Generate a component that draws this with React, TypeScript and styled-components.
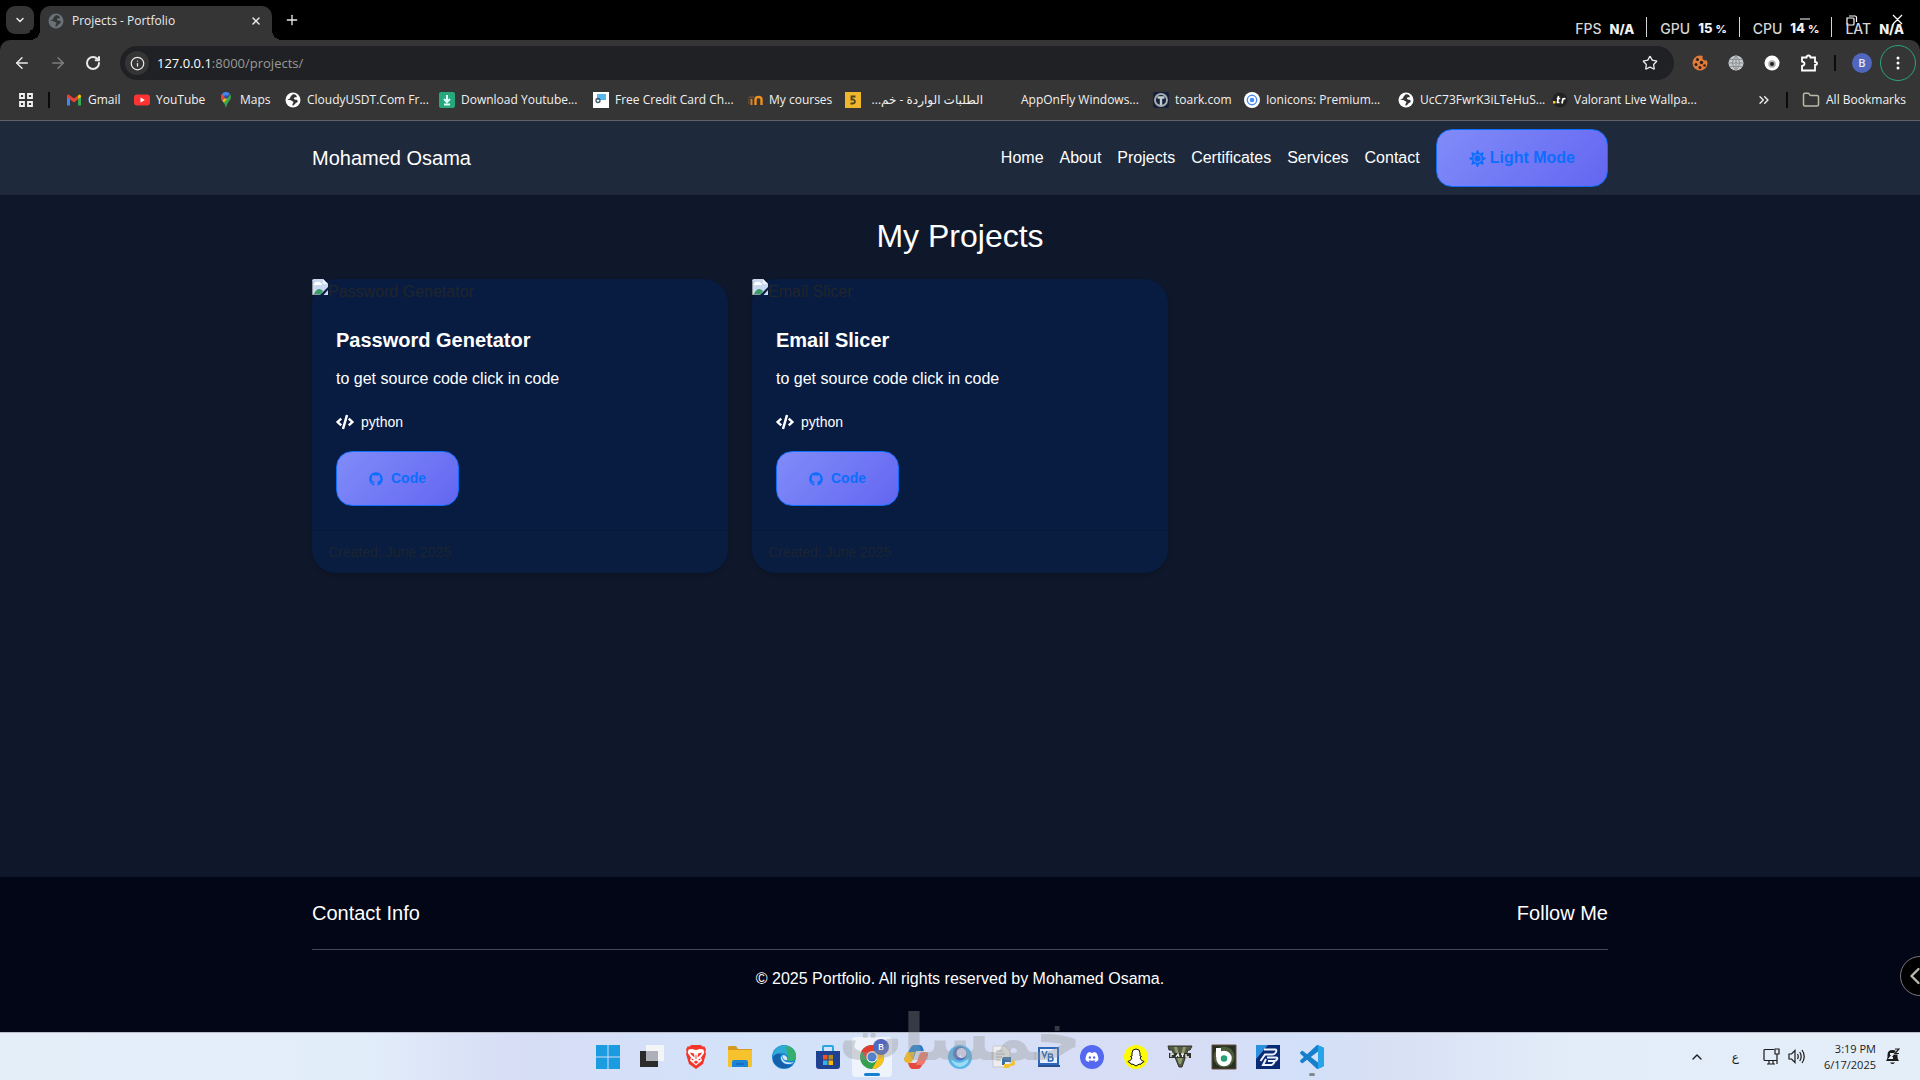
import React from 'react';
import styled, { createGlobalStyle } from 'styled-components';
import { FaCode, FaGithub, FaSun, FaDiscord } from 'react-icons/fa';
import {
  ArrowLeft, ArrowRight, RotateCw, Info, Star, ChevronDown, ChevronUp,
  ChevronLeft, ChevronsRight, Folder, Plus, X,
} from 'lucide-react';

const UI = '"Open Sans", "Noto Sans", "DejaVu Sans", sans-serif';
const SITE = '"Liberation Sans", Arial, sans-serif';

const GlobalStyle = createGlobalStyle`
  *, *::before, *::after { box-sizing: border-box; }
  body { margin: 0; background: #000; overflow-x: hidden; font-family: ${SITE}; }
  button { font: inherit; color: inherit; background: none; border: 0; padding: 0; cursor: pointer; }
  a { color: inherit; text-decoration: none; }
  svg { display: block; flex: none; }
  h1, h2, h3, p { margin: 0; font-weight: 400; }
`;

const Screen = styled.div`
  position: relative;
  min-height: 100vh;
  display: flex;
  flex-direction: column;
  overflow: hidden;
`;

/* ---------- browser ---------- */

const TabStrip = styled.div`
  display: flex;
  align-items: flex-end;
  height: 40px;
  padding: 0 6px;
  background: #000;
  color: #e8eaed;
`;

const TabSearch = styled.button`
  display: grid;
  place-items: center;
  width: 28px;
  height: 28px;
  margin: 0 6px 6px 0;
  border-radius: 9px;
  background: #353535;
`;

const Tab = styled.div`
  position: relative;
  display: flex;
  align-items: center;
  width: 232px;
  height: 34px;
  padding: 0 10px 4px 8px;
  border-radius: 10px 10px 0 0;
  background: #353535;
  font: 12px/16px ${UI};
  &::before, &::after {
    content: '';
    position: absolute;
    bottom: 0;
    width: 10px;
    height: 10px;
  }
  &::before { right: 100%; background: radial-gradient(circle at 0 0, #000 10px, #353535 10px); }
  &::after { left: 100%; background: radial-gradient(circle at 100% 0, #000 10px, #353535 10px); }
`;

const TabTitle = styled.span`
  flex: 1;
  margin-left: 8px;
  white-space: nowrap;
`;

const NewTab = styled.button`
  margin: 0 0 12px 12px;
`;

const Toolbar = styled.div`
  display: flex;
  align-items: center;
  gap: 18px;
  height: 46px;
  padding: 0 4px 0 13px;
  border-radius: 10px 10px 0 0;
  background: #353535;
  color: #e8eaed;
`;

const NavButton = styled.button<{ $dim?: boolean }>`
  color: ${(p) => (p.$dim ? '#7d7f7b' : '#e8eaed')};
`;

const AddressBar = styled.div`
  display: flex;
  flex: 1;
  align-items: center;
  height: 34px;
  margin-left: 1px;
  padding: 0 16px 0 5px;
  border-radius: 17px;
  background: #202124;
`;

const SiteInfo = styled.button`
  display: grid;
  place-items: center;
  width: 24px;
  height: 24px;
  border-radius: 50%;
  background: #353535;
`;

const Url = styled.div`
  flex: 1;
  margin-left: 8px;
  color: #9a9a96;
  font: 13px/20px ${UI};
`;

const Host = styled.span`
  color: #fff;
`;

const Extensions = styled.div`
  display: flex;
  align-items: center;
  gap: 20px;
`;

const Separator = styled.span`
  width: 2px;
  height: 16px;
  background: #0b0b0b;
`;

const ToolbarSeparator = styled(Separator)`
  margin: 0 -4px;
`;

const Avatar = styled.button`
  width: 20px;
  height: 20px;
  border-radius: 50%;
  background: #5167bd;
  font: 600 11px/20px ${UI};
  text-align: center;
`;

const MenuButton = styled.button`
  display: grid;
  place-items: center;
  width: 36px;
  height: 36px;
  margin-left: -10px;
  border: 1px solid #2aa482;
  border-radius: 50%;
`;

const Bookmarks = styled.nav`
  display: flex;
  align-items: center;
  height: 35px;
  padding: 0 14px 7px 19px;
  border-bottom: 1px solid #5f6368;
  background: #353535;
  color: #f1f1f1;
  font: 12px/16px ${UI};
`;

const BookmarkList = styled.div`
  display: flex;
  flex: 1;
  align-items: center;
  gap: 16px;
  margin-left: 15px;
`;

const Bookmark = styled.a`
  display: flex;
  align-items: center;
  gap: 6px;
  white-space: nowrap;
`;

const BookmarkText = styled.span<{ $w: number }>`
  width: ${(p) => p.$w}px;
`;

const Favicon = styled.svg.attrs({ width: 16, height: 16, viewBox: '0 0 16 16' })``;

const Overflow = styled.div`
  display: flex;
  align-items: center;
  gap: 14px;
`;

/* ---------- performance overlay ---------- */

const WindowControls = styled.div`
  position: absolute;
  top: 10px;
  right: 16px;
  color: #fff;
`;

const Stats = styled.div`
  position: absolute;
  top: 15px;
  right: 16px;
  display: flex;
  align-items: center;
  color: #d5d5d5;
  font: 500 14px/20px Inter, Roboto, sans-serif;
`;

const Stat = styled.div`
  display: flex;
  align-items: center;
  gap: 8px;
  padding-top: 3px;
  white-space: nowrap;
  & + & { margin-left: 12px; }
  & + &::before {
    content: '';
    width: 1px;
    height: 20px;
    margin: -3px 5px 0 0;
    background: #d5d5d5;
  }
`;

const StatValue = styled.b`
  color: #f2f2f2;
  font-size: 13px;
  font-weight: 800;
  small { margin-left: 3px; font-size: 11px; }
`;

/* ---------- site ---------- */

const Container = styled.div`
  width: 100%;
  max-width: 1320px;
  margin: 0 auto;
  padding: 0 12px;
`;

const Header = styled.header`
  padding: 8px 0;
  background: #1e293b;
  color: #fff;
`;

const HeaderRow = styled(Container)`
  display: flex;
  align-items: center;
  justify-content: space-between;
`;

const Brand = styled.a`
  font-size: 20px;
  line-height: 30px;
`;

const SiteNav = styled.nav`
  display: flex;
  align-items: center;
  gap: 16px;
  font-size: 16px;
  line-height: 24px;
`;

const ActionButton = styled.button<{ $small?: boolean }>`
  display: inline-flex;
  align-items: center;
  gap: ${(p) => (p.$small ? 8 : 4)}px;
  padding: 16px 32px;
  border: 1px solid #0d6efd;
  border-radius: 16px;
  background: linear-gradient(135deg, #818cf8, #6366f1);
  color: #0d6efd;
  font-size: ${(p) => (p.$small ? 14 : 16)}px;
  font-weight: 700;
  line-height: ${(p) => (p.$small ? 21 : 24)}px;
`;

const Main = styled.main`
  flex: 1;
  padding: 20px 0 24px;
  background: #0f172a;
  color: #fff;
`;

const PageTitle = styled.h1`
  margin-bottom: 22px;
  font-size: 32px;
  line-height: 42px;
  text-align: center;
`;

const Grid = styled.div`
  display: grid;
  grid-template-columns: repeat(3, 1fr);
  gap: 24px;
`;

const Card = styled.article`
  border-radius: 24px;
  background: #081c42;
  box-shadow: 0 2px 4px rgba(0, 0, 0, 0.2);
`;

const Picture = styled.div`
  display: flex;
  height: 24px;
  color: #212529;
  font-size: 16px;
  line-height: 26px;
`;

const CardBody = styled.div`
  padding: 24px;
`;

const CardTitle = styled.h2`
  margin-bottom: 14px;
  font-size: 20px;
  font-weight: 700;
  line-height: 26px;
`;

const CardText = styled.p`
  margin-bottom: 20px;
  font-size: 16px;
  line-height: 24px;
`;

const Tech = styled.p`
  display: flex;
  align-items: center;
  gap: 7px;
  margin-bottom: 18px;
  font-size: 14px;
  line-height: 22px;
`;

const CardFooter = styled.div`
  padding: 10px 16px;
  border-top: 1px solid #07183a;
  border-radius: 0 0 24px 24px;
  background: #081d40;
  color: #1d2430;
  font-size: 14px;
  line-height: 22px;
`;

const Footer = styled.footer`
  padding: 24px 0 40px;
  background: #020617;
  color: #fff;
`;

const FooterRow = styled.div`
  display: flex;
  justify-content: space-between;
  padding-bottom: 24px;
  border-bottom: 1px solid #474a56;
`;

const FooterTitle = styled.h3`
  font-size: 20px;
  line-height: 24px;
`;

const Copyright = styled.p`
  margin-top: 16px;
  font-size: 16px;
  line-height: 26px;
  text-align: center;
`;

const SideHandle = styled.button`
  position: absolute;
  right: -20px;
  bottom: 84px;
  display: flex;
  align-items: center;
  width: 40px;
  height: 40px;
  border: 1px solid #77777a;
  border-radius: 50%;
  background: #000;
  color: #b9b9ae;
`;

const Watermark = styled.div`
  position: absolute;
  left: 50%;
  bottom: 4px;
  transform: translateX(-50%);
  color: rgba(150, 150, 150, 0.36);
  font: 700 64px/76px "DejaVu Sans", sans-serif;
  white-space: nowrap;
  pointer-events: none;
`;

/* ---------- taskbar ---------- */

const Taskbar = styled.div`
  display: grid;
  grid-template-columns: 1fr auto 1fr;
  align-items: center;
  height: 48px;
  border-top: 1px solid #b9bdc9;
  background: linear-gradient(90deg, #e4eef9 0%, #e2edfa 19%, #d6ddf5 27%, #d3e3fa 39%, #d7dff6 50%, #d6ddf4 62%, #d3e0f9 68%, #d8e0f4 72%, #e2edf9 82%, #e4eef9 100%);
  color: #1b1b1b;
`;

const Apps = styled.div`
  grid-column: 2;
  display: flex;
  gap: 4px;
`;

const TaskButton = styled.button<{ $active?: boolean; $mark?: string }>`
  position: relative;
  display: grid;
  place-items: center;
  width: 40px;
  height: 40px;
  border-radius: 4px;
  background: ${(p) => (p.$active ? 'rgba(255,255,255,.6)' : 'transparent')};
  &::after {
    content: '';
    position: absolute;
    bottom: 1px;
    width: ${(p) => (p.$active ? 16 : 6)}px;
    height: 3px;
    border-radius: 2px;
    background: ${(p) => p.$mark || 'transparent'};
  }
`;

const AppIcon = styled.svg.attrs({ width: 24, height: 24, viewBox: '0 0 24 24' })`
  overflow: visible;
`;

const Badge = styled.span`
  position: absolute;
  top: 2px;
  right: 3px;
  width: 16px;
  height: 16px;
  border-radius: 50%;
  background: #5167bd;
  color: #fff;
  font: 600 9px/16px ${UI};
`;

const Tray = styled.div`
  display: flex;
  align-items: center;
  justify-content: flex-end;
  padding-right: 20px;
  font: 12px/16px ${UI};
`;

const Language = styled.span`
  margin: 0 24px 0 27px;
`;

const Clock = styled.div`
  width: 71px;
  margin-right: 9px;
  font-size: 11px;
  text-align: right;
  white-space: nowrap;
`;

const TrayIcons = styled.div`
  display: flex;
  gap: 8px;
`;

/* ---------- drawings ---------- */

const Globe = ({ bg = '#fff', fg = '#353535' }: { bg?: string; fg?: string }) => (
  <Favicon>
    <circle cx="8" cy="8" r="7.500" fill={bg} />
    <path d="M8.500 2.200c-2 .3-1.800 1.500-2.500 2-1 .6-.4 1.600-1.300 2.200L2.200 8c1.300.2 3-.3 4 .5.8.8 1.800.6 2.200 1.500.3.900-1 1.400-1 2.300l.3 1.500c2-.2 1.800-1.500 2.600-2.200.9-.9 2.600-1.200 2.400-2.700C12.500 7.500 11 8 9.800 7.500c-1-.4-1.300-1.500-.3-2 1-.400 1.800.2 2.300-.6.400-.8-1.300-2.800-3.300-2.700z" fill={fg} />
  </Favicon>
);

const favicons: Record<string, React.ReactNode> = {
  gmail: (
    <Favicon>
      <path d="M1 4v9.500h3V7z" fill="#4285f4" />
      <path d="M15 4v9.500h-3V7z" fill="#34a853" />
      <path d="M12 7V3.500l1.500-1Q15 2.500 15 4v1z" fill="#fbbc04" />
      <path d="M1 5V4q0-1.800 2-1.300l5 3.800 4-3v3.700L8 10.500z" fill="#ea4335" />
    </Favicon>
  ),
  youtube: (
    <Favicon>
      <rect x="0" y="2.500" width="16" height="11" rx="3" fill="#f33" />
      <path d="M6.500 5.500v5L10.800 8z" fill="#fff" />
    </Favicon>
  ),
  maps: (
    <Favicon>
      <path d="M8 0a5 5 0 0 0-5 5c0 1.500.5 2.500 1.500 4L12 2A5 5 0 0 0 8 0z" fill="#4285f4" />
      <path d="M3.800 2.200 8 5 4 8.500C2.700 6.500 2.500 4 3.800 2.200z" fill="#ea4335" />
      <path d="M4.300 8.700 8 5l2 2-4 4z" fill="#fbbc04" />
      <path d="M12.300 2.300C13.600 5 13 7 11 9.300 9.300 11.500 8.800 13 8 16c-.6-2.200-1-3.500-2.200-5z" fill="#34a853" />
      <circle cx="8" cy="5" r="1.800" fill="#2b4cae" />
    </Favicon>
  ),
  globe: <Globe />,
  download: (
    <Favicon>
      <rect width="16" height="16" rx="2" fill="#26a87c" />
      <path d="M8 3v6M5 7l3 3 3-3M5 12.500h6" stroke="#dff" strokeWidth="2" fill="none" />
    </Favicon>
  ),
  card: (
    <Favicon>
      <rect width="16" height="16" fill="#fff" />
      <rect x="4" y="2" width="9" height="6" fill="#56b7ec" />
      <circle cx="5" cy="8.500" r="2" fill="none" stroke="#456" strokeWidth="1.300" />
    </Favicon>
  ),
  moodle: (
    <Favicon>
      <path d="M8.500 13V7.500q0-2.500 3-2.500t3 2.500V13" stroke="#f09020" strokeWidth="2.400" fill="none" />
      <path d="M4.500 13V7" stroke="#d98324" strokeWidth="2" />
      <path d="M0 5.500 5 3.500l3 1.500-4 2zM1 7v5h1.500V7z" fill="#5a4a3a" />
    </Favicon>
  ),
  five: (
    <Favicon>
      <rect width="16" height="16" fill="#f0b62c" />
      <path d="M10.500 4.500h-4v3c4-.8 4.500 4 1.500 4H5.500" stroke="#4e4420" strokeWidth="1.800" fill="none" />
    </Favicon>
  ),
  blank: <Favicon />,
  toark: (
    <Favicon>
      <rect width="16" height="16" rx="2" fill="#15213c" />
      <circle cx="8" cy="8" r="6" fill="none" stroke="#a5adaf" strokeWidth="2" />
      <path d="M4.500 5.500h7M8 5v8" stroke="#c5cccc" strokeWidth="2.400" />
    </Favicon>
  ),
  ion: (
    <Favicon>
      <circle cx="8" cy="8" r="8" fill="#fff" />
      <circle cx="8" cy="8" r="4.700" fill="none" stroke="#4b8bf5" strokeWidth="1.400" />
      <circle cx="8" cy="8" r="2.300" fill="#4b8bf5" />
    </Favicon>
  ),
  tracker: (
    <Favicon>
      <circle cx="8" cy="8" r="7.500" fill="#222" />
      <rect x="1" y="9" width="2.500" height="2.500" fill="#fc2" />
      <path d="M6.500 4 5.500 10.500h2M4.800 6.500h3.500M11 6.500 10 11.500M10.500 7.500q1-1.300 3-.8" stroke="#fff" strokeWidth="1.700" fill="none" />
    </Favicon>
  ),
};

const bookmarks: [string, string, number][] = [
  ['gmail', 'Gmail', 30],
  ['youtube', 'YouTube', 46],
  ['maps', 'Maps', 29],
  ['globe', 'CloudyUSDT.Com Fr...', 116],
  ['download', 'Download Youtube...', 116],
  ['card', 'Free Credit Card Ch...', 116],
  ['moodle', 'My courses', 60],
  ['five', 'الطلبات الواردة - خم...', 116],
  ['blank', 'AppOnFly Windows...', 116],
  ['toark', 'toark.com', 53],
  ['ion', 'Ionicons: Premium...', 116],
  ['globe', 'UcC73FwrK3iLTeHuS...', 116],
  ['tracker', 'Valorant Live Wallpa...', 116],
];

const BrokenImage = () => (
  <svg width="16" height="16" viewBox="0 0 16 16">
    <path d="M0 2q0-2 2-2h9l5 5v11H0z" fill="#c9d9ef" />
    <path d="M11 0v5h5z" fill="#f2f5f9" />
    <path d="M2 5q1-2.500 3-2 2-1.500 3.500 1 2 0 1.500 2H2z" fill="#fff" />
    <path d="M2 15q4-8 9-3l-3 4H2z" fill="#3a9a66" />
    <path d="M8 16 16 8v3l-4.500 5z" fill="#081c42" />
    <path d="M0 15.500h8M.5 2v14" stroke="#8e989c" />
  </svg>
);

const taskApps: { name: string; icon: React.ReactNode; active?: boolean; mark?: string }[] = [
  { name: 'Start', icon: (
    <AppIcon><path d="M0 0h11.500v11.500H0zM12.500 0H24v11.500H12.500zM0 12.500h11.500V24H0zM12.500 12.500H24V24H12.500z" fill="#1b9be0" /></AppIcon>
  ) },
  { name: 'Task view', icon: (
    <AppIcon><rect y="6" width="18" height="16" fill="#2b2b2b" /><rect x="6" width="18" height="16" fill="#f4f5f7" /><rect x="6" y="6" width="12" height="10" fill="#adb0b8" /></AppIcon>
  ) },
  { name: 'Brave', icon: (
    <AppIcon>
      <path d="M7 0 5.500 1.500H3.500L2 4.500l.7 2L2 9l3 10 7 5 7-5 3-10-.7-2.500.7-2-1.500-3h-2L17 0z" fill="#f4362a" />
      <path d="m8 4-3.500.5L3.800 8 7 12.500l-1 3 6 5 6-5-1-3L20.200 8l-.7-3.500L16 4l-4 1z" fill="#fff" />
      <path d="m6 7.500 4 1 .5 4-3.500-3zM18 7.500l-4 1-.5 4 3.500-3zM12 15.500l2.500 1.500-2.500 2-2.500-2zM11.500 10h1v4h-1zM7 13.500l3 .8-1.500 1.200zM17 13.500l-3 .8 1.500 1.200z" fill="#f4362a" />
    </AppIcon>
  ) },
  { name: 'Explorer', icon: (
    <AppIcon><path d="M0 2q0-1 1-1h7l2 3h13q1 0 1 1v6H0z" fill="#d79a1e" /><rect y="5" width="24" height="17" rx="1" fill="#f6c32f" /><path d="M4 22v-5q0-2 2-2h12q2 0 2 2v5z" fill="#1c84d6" /><path d="M8 19h8" stroke="#0b5aa8" /></AppIcon>
  ) },
  { name: 'Edge', icon: (
    <AppIcon><circle cx="12" cy="12" r="12" fill="#1687d0" /><path d="M1 9C4-3 23-3 24 11c0 5-5 6-9 4 3-3 0-7-5-7-4 0-7 1-9 3z" fill="#2fa9d5" /><path d="M14 1c7 1 10 5 10 10 0 5-5 6-9 4 3-3 1-5 0-7z" fill="#34b06c" /><path d="M9 9c-3 5 1 12 12 11-9 7-20 1-20-6 0-4 4-6 8-5z" fill="#174f9e" opacity=".7" /><path d="M11 10c-3 5 3 9 11 7-4 4-13 2-13-4 0-1 1-2 2-3z" fill="#d9e6f8" /><path d="M11 10c-1 3 1 6 4 5 1-2-1-5-4-5z" fill="#d9e6f8" /></AppIcon>
  ) },
  { name: 'Store', icon: (
    <AppIcon><path d="M7 7V2q0-1 1-1h8q1 0 1 1v5" fill="none" stroke="#26a9e0" strokeWidth="2" /><path d="M0 6h24v15q0 3-3 3H3q-3 0-3-3z" fill="#20418f" /><path d="M7 10h4.500v4.500H7z" fill="#f25022" /><path d="M12.500 10H17v4.500h-4.500z" fill="#b08b1e" /><path d="M7 15.500h4.500V20H7z" fill="#35b3ee" /><path d="M12.500 15.500H17V20h-4.500z" fill="#ffb900" /></AppIcon>
  ) },
  { name: 'Chrome', active: true, mark: '#1480d2', icon: (
    <><AppIcon><circle cx="12" cy="12" r="12" fill="#31a04f" /><path d="M1.600 6A12 12 0 0 1 22.400 6H12l-5 9z" fill="#e33b2e" /><path d="M22.400 6A12 12 0 0 1 12 24l5.200-9L12 6z" fill="#fbc116" /><circle cx="12" cy="12" r="5.700" fill="#fff" /><circle cx="12" cy="12" r="4.500" fill="#3578e5" /></AppIcon><Badge>B</Badge></>
  ) },
  { name: 'Copilot', icon: (
    <AppIcon>
      <path d="M7 2q1-2 3-2h6q2 0 3 3l1 3h-8l-3 9-9-1z" fill="#2480cf" />
      <path d="M0 14 3 7h8l-2 7q-1 4-4 4-5 0-5-4z" fill="#e8b532" />
      <path d="M17 22q-1 2-3 2H8q-2 0-3-3l-1-3h8l3-9 9 1z" fill="#e8493f" />
      <path d="m24 10-3 7q-1 3-4 3h-5l3-9q1-4 4-4h2q4 0 3 3z" fill="#ed7a6c" />
      <path d="m9 17 3-9h4l-3 9z" fill="#dce5f6" />
    </AppIcon>
  ) },
  { name: 'Browser', icon: (
    <AppIcon><circle cx="12" cy="12" r="12" fill="#58b5e8" /><path d="M3 14q8 8 18-1-1 8-9 9-7-1-9-8z" fill="#9bdcf5" /><circle cx="12" cy="8.500" r="7" fill="#5873bd" /><circle cx="13.500" cy="8" r="5" fill="#d7ddf6" /></AppIcon>
  ) },
  { name: 'Python', icon: (
    <AppIcon><path d="M1 1h12l5 5v16H1z" fill="#eeeef0" stroke="#c9c9cc" /><path d="M4 6h7M4 9h9M4 12h6M4 15h5" stroke="#aeb2b8" /><path d="M12 12h7v5h-6v3h-3v-5q0-3 2-3z" fill="#3971a5" /><path d="M20 15q3 0 3 3t-3 3h-3v2h-5v-4h7z" fill="#f5c231" /></AppIcon>
  ) },
  { name: 'Visual Basic', icon: (
    <AppIcon><path d="M3 3h19v16H3z" fill="#e7f0ff" stroke="#2c67b9" strokeWidth="2" /><path d="M2 21h22" stroke="#294f93" strokeWidth="2" /><path d="m6 6 2.500 6L11 6M12.500 9v7H15q2 0 2-2t-2-2h-2.500H15q1.500 0 1.500-1.500T15 9z" fill="none" stroke="#2461b8" strokeWidth="1.500" /></AppIcon>
  ) },
  { name: 'Discord', icon: (
    <AppIcon><circle cx="12" cy="12" r="12" fill="#5468f0" /><g transform="translate(5 5)"><FaDiscord size={14} color="#fff" /></g></AppIcon>
  ) },
  { name: 'Snapchat', icon: (
    <AppIcon><circle cx="12" cy="12" r="12" fill="#fffb00" /><path d="M12 4q-4 0-4 4v3l-1.500.5L8 13q-1 3-4 3.500.5 1.300 2.500 1.500l.5 1.200h2L12 21l3-1.800h2l.5-1.200q2-.2 2.500-1.500-3-.5-4-3.500l1.500-1.500L16 11V8q0-4-4-4z" fill="#fff" stroke="#111" /></AppIcon>
  ) },
  { name: 'Game', icon: (
    <AppIcon><path d="M0 1h24l-2 4h-2l-6 17h-3L4 5H1z" fill="#555b46" stroke="#30342b" /><path d="M6 2h3l3 12 3-12h3l-5 17h-2z" fill="#8d9b6b" /><path d="M1 8h22v5H1z" fill="#2f322d" /><path d="M3 12V9h2v1M8 12l2-3 1 3M13 9h3M14.500 9v3M18 9v3h3" stroke="#f4f4f0" strokeWidth="1.300" fill="none" /></AppIcon>
  ) },
  { name: 'Bandicam', icon: (
    <AppIcon><path d="M0 0h24v24H0z" fill="#253020" stroke="#6e4840" /><circle cx="12" cy="12" r="10.500" fill="#4d5b3a" /><path d="M6.500 3v9" stroke="#fff" strokeWidth="5" /><circle cx="12" cy="13.500" r="5.500" fill="#28a074" stroke="#fff" strokeWidth="4.500" /></AppIcon>
  ) },
  { name: 'Blue', icon: (
    <AppIcon>
      <path d="M0 0h24v24H0z" fill="#0a2a73" /><path d="M0 0h12L0 14z" fill="#2c91dc" />
      <path d="M8 4.500h11q2 0 1 2.500t-4 2.500H9L4.500 16M11 12.500h9q2 0 1 1.800t-3 1.700h-6H17q2 0 1 1.800T15.500 20H7l3-6" fill="none" stroke="#f0f4ff" strokeWidth="2" />
    </AppIcon>
  ) },
  { name: 'VS Code', mark: '#83868c', icon: (
    <AppIcon>
      <path d="M23.150 2.587 18.210.21a1.494 1.494 0 0 0-1.705.29l-9.460 8.630-4.120-3.128a.999.999 0 0 0-1.276.057L.327 7.261A1 1 0 0 0 .326 8.740L3.899 12 .326 15.260a1 1 0 0 0 .001 1.479L1.650 17.940a.999.999 0 0 0 1.276.057l4.120-3.128 9.460 8.630a1.492 1.492 0 0 0 1.704.29l4.942-2.377A1.500 1.500 0 0 0 24 20.060V3.939a1.500 1.500 0 0 0-.850-1.352zm-5.146 14.861L10.826 12l7.178-5.448z" fill="#157fcb" />
      <path d="M18 .2 23.150 2.600Q24 3 24 4v16q0 1-.850 1.400L18 23.800z" fill="#27a5e8" />
    </AppIcon>
  ) },
];

const projects = [
  { title: 'Password Genetator', text: 'to get source code click in code', tech: 'python', date: 'June 2025' },
  { title: 'Email Slicer', text: 'to get source code click in code', tech: 'python', date: 'June 2025' },
];

const links = ['Home', 'About', 'Projects', 'Certificates', 'Services', 'Contact'];

export default function App() {
  return (
    <Screen>
      <GlobalStyle />

      <TabStrip>
        <TabSearch aria-label="Search tabs"><ChevronDown size={12} strokeWidth={3} /></TabSearch>
        <Tab>
          <Globe bg="#687078" fg="#353535" />
          <TabTitle>Projects - Portfolio</TabTitle>
          <button aria-label="Close tab"><X size={12} strokeWidth={3} /></button>
        </Tab>
        <NewTab aria-label="New tab"><Plus size={16} strokeWidth={2} /></NewTab>
      </TabStrip>

      <Toolbar>
        <NavButton aria-label="Back"><ArrowLeft size={18} /></NavButton>
        <NavButton aria-label="Forward" $dim><ArrowRight size={18} /></NavButton>
        <NavButton aria-label="Reload"><RotateCw size={16} strokeWidth={3} /></NavButton>
        <AddressBar>
          <SiteInfo aria-label="Site information"><Info size={15} /></SiteInfo>
          <Url><Host>127.0.0.1</Host>:8000/projects/</Url>
          <button aria-label="Bookmark this page"><Star size={16} /></button>
        </AddressBar>
        <Extensions>
          <svg width="16" height="16" viewBox="0 0 16 16">
            <circle cx="8" cy="8" r="7.500" fill="#e07b39" />
            <g fill="#2d2018"><circle cx="5.500" cy="4.500" r="1.500" /><circle cx="9.500" cy="7.500" r="1.700" /><circle cx="4" cy="9.500" r="1.500" /><circle cx="8" cy="12.500" r="1.500" /><circle cx="12.500" cy="10.500" r="1.300" /></g>
            <circle cx="13.500" cy="2.500" r="3" fill="#353535" />
          </svg>
          <svg width="16" height="16" viewBox="0 0 16 16">
            <circle cx="8" cy="8" r="7.500" fill="#c7cacd" />
            <path d="M0 8h16M8 0v16M1.500 4.500h13M1.500 11.500h13M8 .5q-7 7.500 0 15M8 .5q7 7.500 0 15" stroke="#8b8f93" fill="none" />
          </svg>
          <svg width="16" height="16" viewBox="0 0 16 16">
            <circle cx="8" cy="8" r="7.500" fill="#fff" /><circle cx="8" cy="9" r="3.800" fill="#a9b0ae" /><circle cx="8" cy="9" r="2" fill="#222" />
          </svg>
          <svg width="18" height="18" viewBox="0 0 18 18">
            <path d="M2 3.500h4.500q0-2 2-2t2 2H15v4.500q2 0 2 1.500T15 11v5.500H2v-4.500q2.500-.5 2.500-2.200T2 7.500z" fill="none" stroke="#fff" strokeWidth="1.800" />
          </svg>
          <ToolbarSeparator />
          <Avatar>B</Avatar>
        </Extensions>
        <MenuButton aria-label="Menu">
          <svg width="4" height="16" viewBox="0 0 4 16" fill="#fff"><circle cx="2" cy="3" r="1.500" /><circle cx="2" cy="8" r="1.500" /><circle cx="2" cy="13" r="1.500" /></svg>
        </MenuButton>
      </Toolbar>

      <Bookmarks aria-label="Bookmarks">
        <svg width="14" height="14" viewBox="0 0 14 14" fill="none" stroke="#f1f1f1" strokeWidth="1.800">
          <path d="M1 1h4v4H1zM9 1h4v4H9zM1 9h4v4H1zM9 9h4v4H9z" />
        </svg>
        <BookmarkList>
          <Separator />
          {bookmarks.map(([icon, text, w], i) => (
            <Bookmark key={i} href="#">
              {favicons[icon]}
              <BookmarkText $w={w} dir={icon === 'five' ? 'rtl' : undefined}>{text}</BookmarkText>
            </Bookmark>
          ))}
        </BookmarkList>
        <Overflow>
          <ChevronsRight size={16} />
          <Separator />
          <Bookmark href="#"><Folder size={18} strokeWidth={2} color="#b9bba9" />All Bookmarks</Bookmark>
        </Overflow>
      </Bookmarks>

      <Header>
        <HeaderRow>
          <Brand href="#">Mohamed Osama</Brand>
          <SiteNav>
            {links.map((l) => <a key={l} href="#">{l}</a>)}
            <ActionButton><FaSun size={17} />Light Mode</ActionButton>
          </SiteNav>
        </HeaderRow>
      </Header>

      <Main>
        <Container>
          <PageTitle>My Projects</PageTitle>
          <Grid>
            {projects.map((p) => (
              <Card key={p.title}>
                <Picture><BrokenImage />{p.title}</Picture>
                <CardBody>
                  <CardTitle>{p.title}</CardTitle>
                  <CardText>{p.text}</CardText>
                  <Tech><FaCode size={18} />{p.tech}</Tech>
                  <ActionButton as="a" href="#" $small><FaGithub size={14} />Code</ActionButton>
                </CardBody>
                <CardFooter>Created: {p.date}</CardFooter>
              </Card>
            ))}
          </Grid>
        </Container>
      </Main>

      <Footer>
        <Container>
          <FooterRow>
            <FooterTitle>Contact Info</FooterTitle>
            <FooterTitle>Follow Me</FooterTitle>
          </FooterRow>
          <Copyright>© 2025 Portfolio. All rights reserved by Mohamed Osama.</Copyright>
        </Container>
      </Footer>

      <Taskbar>
        <Apps>
          {taskApps.map((a) => (
            <TaskButton key={a.name} aria-label={a.name} $active={a.active} $mark={a.mark}>{a.icon}</TaskButton>
          ))}
        </Apps>
        <Tray>
          <ChevronUp size={16} strokeWidth={2} />
          <Language>ع</Language>
          <TrayIcons>
            <svg width="17" height="17" viewBox="0 0 17 17" fill="none" stroke="#1b1b1b" strokeWidth="1.200">
              <path d="M11 1.500H2q-1 0-1 1v9q0 1 1 1h12V7M6 12.500V16M10 12.500V16M4 16h8M12 1h4v5h-4zM14 6v10" />
            </svg>
            <svg width="17" height="17" viewBox="0 0 17 17" fill="none" stroke="#1b1b1b" strokeWidth="1.200">
              <path d="M1 6v5h2.500L7 14.500v-12L3.500 6zM9.500 6q1.500 2.500 0 5M11.700 4q3 4.500 0 9M14 2q4.500 6.500 0 13" />
            </svg>
          </TrayIcons>
          <Clock>3:19 PM<br />6/17/2025</Clock>
          <svg width="15" height="17" viewBox="0 0 15 17">
            <path d="M1 13q1.500-2 1.500-4V7q0-5 5-5t5 5v2q0 2 1.500 4zM5 14.500h5q-2.500 3-5 0z" fill="#1b1b1b" />
            <path d="M5 6h3l-3 4h3M10 1h4l-4 4.500h4" stroke="#e4eef9" strokeWidth="2" fill="none" />
            <path d="M10 1h4l-4 4.500h4" stroke="#1b1b1b" strokeWidth="1.200" fill="none" />
          </svg>
        </Tray>
      </Taskbar>

      <WindowControls aria-hidden>
        <svg width="120" height="18" viewBox="0 0 120 18" fill="none" stroke="#fff" strokeWidth="1.200">
          <path d="M16 9h10M63 8h6q1 0 1 1v5q0 1-1 1h-5q-1 0-1-1zM65 6h6q1.500 0 1.500 1.500V12M109 5l9 9M118 5l-9 9" />
        </svg>
      </WindowControls>
      <Stats>
        <Stat>FPS <StatValue>N/A</StatValue></Stat>
        <Stat>GPU <StatValue>15<small>%</small></StatValue></Stat>
        <Stat>CPU <StatValue>14<small>%</small></StatValue></Stat>
        <Stat>LAT <StatValue>N/A</StatValue></Stat>
      </Stats>
      <SideHandle aria-label="Open side panel"><ChevronLeft size={28} /></SideHandle>
      <Watermark dir="rtl" lang="ar">خمسات</Watermark>
    </Screen>
  );
}
